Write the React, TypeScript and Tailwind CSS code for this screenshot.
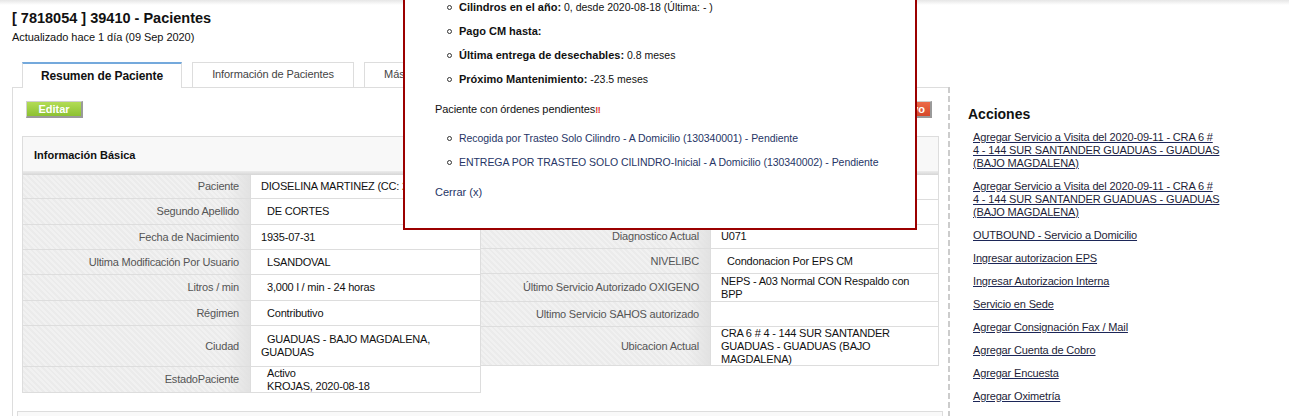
import type { ReactNode } from "react";

type Row = { label: string; value: ReactNode; h: string; indent?: boolean };

const leftRows: Row[] = [
  { label: "Paciente", value: "DIOSELINA MARTINEZ (CC: 20612345)", h: "h-[24px]" },
  { label: "Segundo Apellido", value: "DE CORTES", h: "h-[26px]", indent: true },
  { label: "Fecha de Nacimiento", value: "1935-07-31", h: "h-[25px]" },
  { label: "Ultima Modificación Por Usuario", value: "LSANDOVAL", h: "h-[25px]", indent: true },
  { label: "Litros / min", value: "3,000 l / min - 24 horas", h: "h-[26px]", indent: true },
  { label: "Régimen", value: "Contributivo", h: "h-[25px]", indent: true },
  {
    label: "Ciudad",
    value: (
      <>
        <span className="pl-[6px]">GUADUAS - BAJO MAGDALENA,</span>
        <br />
        GUADUAS
      </>
    ),
    h: "h-[41px]",
  },
  {
    label: "EstadoPaciente",
    value: (
      <>
        Activo
        <br />
        KROJAS, 2020-08-18
      </>
    ),
    h: "h-[26px]",
    indent: true,
  },
];

const rightRows: Row[] = [
  { label: "Teléfono", value: "", h: "h-[25px]" },
  { label: "EPS", value: "", h: "h-[25px]" },
  { label: "Diagnostico Actual", value: "U071", h: "h-[24px]" },
  { label: "NIVELIBC", value: "Condonacion Por EPS CM", h: "h-[25px]", indent: true },
  {
    label: "Último Servicio Autorizado OXIGENO",
    value: (
      <>
        NEPS - A03 Normal CON Respaldo con
        <br />
        BPP
      </>
    ),
    h: "h-[28px]",
  },
  { label: "Ultimo Servicio SAHOS autorizado", value: "", h: "h-[25px]" },
  {
    label: "Ubicacion Actual",
    value: (
      <>
        CRA 6 # 4 - 144 SUR SANTANDER
        <br />
        GUADUAS - GUADUAS (BAJO
        <br />
        MAGDALENA)
      </>
    ),
    h: "h-[39px]",
  },
];

const acciones: ReactNode[] = [
  <>
    Agregar Servicio a Visita del 2020-09-11 - CRA 6 #
    <br />4 - 144 SUR SANTANDER GUADUAS - GUADUAS
    <br />
    (BAJO MAGDALENA)
  </>,
  <>
    Agregar Servicio a Visita del 2020-09-11 - CRA 6 #
    <br />4 - 144 SUR SANTANDER GUADUAS - GUADUAS
    <br />
    (BAJO MAGDALENA)
  </>,
  "OUTBOUND - Servicio a Domicilio",
  "Ingresar autorizacion EPS",
  "Ingresar Autorizacion Interna",
  "Servicio en Sede",
  "Agregar Consignación Fax / Mail",
  "Agregar Cuenta de Cobro",
  "Agregar Encuesta",
  "Agregar Oximetría",
];

const labelBg =
  "bg-[linear-gradient(to_right,transparent_90%,#e2e2e2),repeating-linear-gradient(45deg,#f1f1f1_0px,#f1f1f1_2px,#ebebeb_2px,#ebebeb_4px)]";

function InfoTable({ rows, labelW, className }: { rows: Row[]; labelW: string; className: string }) {
  return (
    <div className={className}>
      {rows.map((row) => (
        <div key={row.label} className={`flex border-b border-[#dddddd] ${row.h}`}>
          <div
            className={`flex shrink-0 items-center justify-end border-r border-[#dddddd] pr-[11px] tracking-[-0.2px] text-[#555] ${labelW} ${labelBg}`}
          >
            {row.label}
          </div>
          <div className="flex min-w-0 flex-1 items-center overflow-hidden whitespace-nowrap pl-[10px] tracking-[-0.2px] text-[#111]">
            <div className={row.indent ? "pl-[6px]" : ""}>{row.value}</div>
          </div>
        </div>
      ))}
    </div>
  );
}

function Bullet({ children, className = "" }: { children: ReactNode; className?: string }) {
  return (
    <li className={`flex h-[24px] items-center ${className}`}>
      <span className="mr-[7px] size-[5px] shrink-0 rounded-full border border-[#333]" />
      <span className="whitespace-nowrap">{children}</span>
    </li>
  );
}

export default function App() {
  return (
    <div className="relative h-[416px] w-[1289px] overflow-hidden bg-white font-['Liberation_Sans',Arial,sans-serif] text-[11px] leading-[13px] text-[#111]">
      <div className="h-[5px] bg-gradient-to-b from-[#e6e6e6] to-white" />

      {/* Title */}
      <div className="pl-[12px] pt-[5px]">
        <h1 className="text-[14.5px] font-bold leading-[17px]">[ 7818054 ] 39410 - Pacientes</h1>
        <p className="mt-[4px] tracking-[-0.05px]">Actualizado hace 1 día (09 Sep 2020)</p>
      </div>

      <div className="mt-[18px] flex">
        {/* Main column */}
        <div className="ml-[12px] w-[938px] shrink-0">
          <div className="flex h-[25px] items-start gap-[10px] pl-[10px]">
            <div className="relative z-10 flex h-[26px] w-[160px] items-center justify-center border-x border-t-2 border-x-[#dddddd] border-t-[#74a9dc] bg-white pt-[1px] text-[12px] font-bold tracking-[-0.1px]">
              Resumen de Paciente
            </div>
            <div className="flex h-[25px] w-[162px] items-center justify-center border-x border-t border-[#dddddd] pb-[2px] tracking-[-0.1px] text-[#444]">
              Información de Pacientes
            </div>
            <div className="flex h-[25px] w-[150px] items-center border-x border-t border-[#dddddd] pb-[2px] pl-[19px] text-[#444]">
              Más Información
            </div>
          </div>

          <div className="flex h-[330px]">
            <div className="flex-1 border-l border-t border-[#dddddd]">
              <div className="flex items-center justify-between pl-[13px] pr-[16px] pt-[13px]">
                <button className="h-[17px] w-[57px] border-b-2 border-l border-r-2 border-t border-b-[#9a9a9a] border-l-[#d0d0d0] border-r-[#9a9a9a] border-t-[#d0d0d0] bg-gradient-to-b from-[#b2dc55] to-[#8cc131] text-[11px] font-bold leading-[13px] text-white">
                  Editar
                </button>
                <button className="h-[17px] w-[72px] border-b-2 border-l border-r-2 border-t border-b-[#9a9a9a] border-l-[#d0d0d0] border-r-[#9a9a9a] border-t-[#d0d0d0] bg-gradient-to-b from-[#ec6a48] to-[#d5482a] pr-[5px] text-right text-[11px] font-bold leading-[13px] text-white">
                  Inactivo
                </button>
              </div>

              {/* Información Básica */}
              <div className="ml-[9px] mt-[18px] w-[917px]">
                <div className="border-x border-t border-[#dddddd] bg-[#f8f8f8]">
                  <div className="h-[34px] pl-[11px] pt-[12px] font-bold text-[#111]">Información Básica</div>
                  <div className="h-[4px] bg-gradient-to-b from-[#ececec] to-[#d6d6d6]" />
                </div>
                <div className="flex items-start">
                  <InfoTable rows={leftRows} labelW="w-[228px]" className="w-[459px] border-x border-[#dddddd]" />
                  <InfoTable rows={rightRows} labelW="w-[230px]" className="w-[458px] border-r border-[#dddddd]" />
                </div>
              </div>

              <div className="ml-[4px] mt-[18px] h-[40px] w-[926px] border border-[#dddddd] bg-[#f9f9f9]" />
            </div>
            <div className="w-[2px] bg-[repeating-linear-gradient(to_bottom,#cccccc_0px,#cccccc_6px,transparent_6px,transparent_9px)]" />
          </div>
        </div>

        {/* Acciones */}
        <div className="pl-[18px]">
          <h2 className="mt-[44px] text-[14px] font-bold leading-[17px]">Acciones</h2>
          <div className="mt-[8px] flex flex-col gap-[10px] pl-[5px]">
            {acciones.map((a, i) => (
              <a
                key={i}
                href="#"
                className="whitespace-nowrap tracking-[-0.15px] text-[#1e1e38] underline decoration-[#1c2658]"
              >
                {a}
              </a>
            ))}
          </div>
        </div>
      </div>

      {/* Modal */}
      <div className="absolute left-[403px] top-[-30px] h-[260px] w-[514px] border-2 border-[#9b0000] bg-white pl-[30px] pt-[23px] text-[10.5px]">
        <ul className="pl-[12px]">
          <Bullet>
            <b className="text-[11px]">Cilindros en el año:</b> 0, desde 2020-08-18 (Última: - )
          </Bullet>
          <Bullet>
            <b className="text-[11px]">Pago CM hasta:</b>
          </Bullet>
          <Bullet>
            <b className="text-[11px]">Última entrega de desechables:</b> 0.8 meses
          </Bullet>
          <Bullet>
            <b className="text-[11px]">Próximo Mantenimiento:</b> -23.5 meses
          </Bullet>
        </ul>
        <p className="mt-[12px] text-[11px] tracking-[-0.1px]">
          Paciente con órdenes pendientes<span className="text-[9px] font-bold text-[#e0322c]">‼</span>
        </p>
        <ul className="mt-[9px] pl-[12px] tracking-[-0.05px] text-[#263566]">
          <Bullet>Recogida por Trasteo Solo Cilindro - A Domicilio (130340001) - Pendiente</Bullet>
          <Bullet>ENTREGA POR TRASTEO SOLO CILINDRO-Inicial - A Domicilio (130340002) - Pendiente</Bullet>
        </ul>
        <p className="mt-[12px] text-[11px] text-[#263566]">Cerrar (x)</p>
      </div>
    </div>
  );
}
